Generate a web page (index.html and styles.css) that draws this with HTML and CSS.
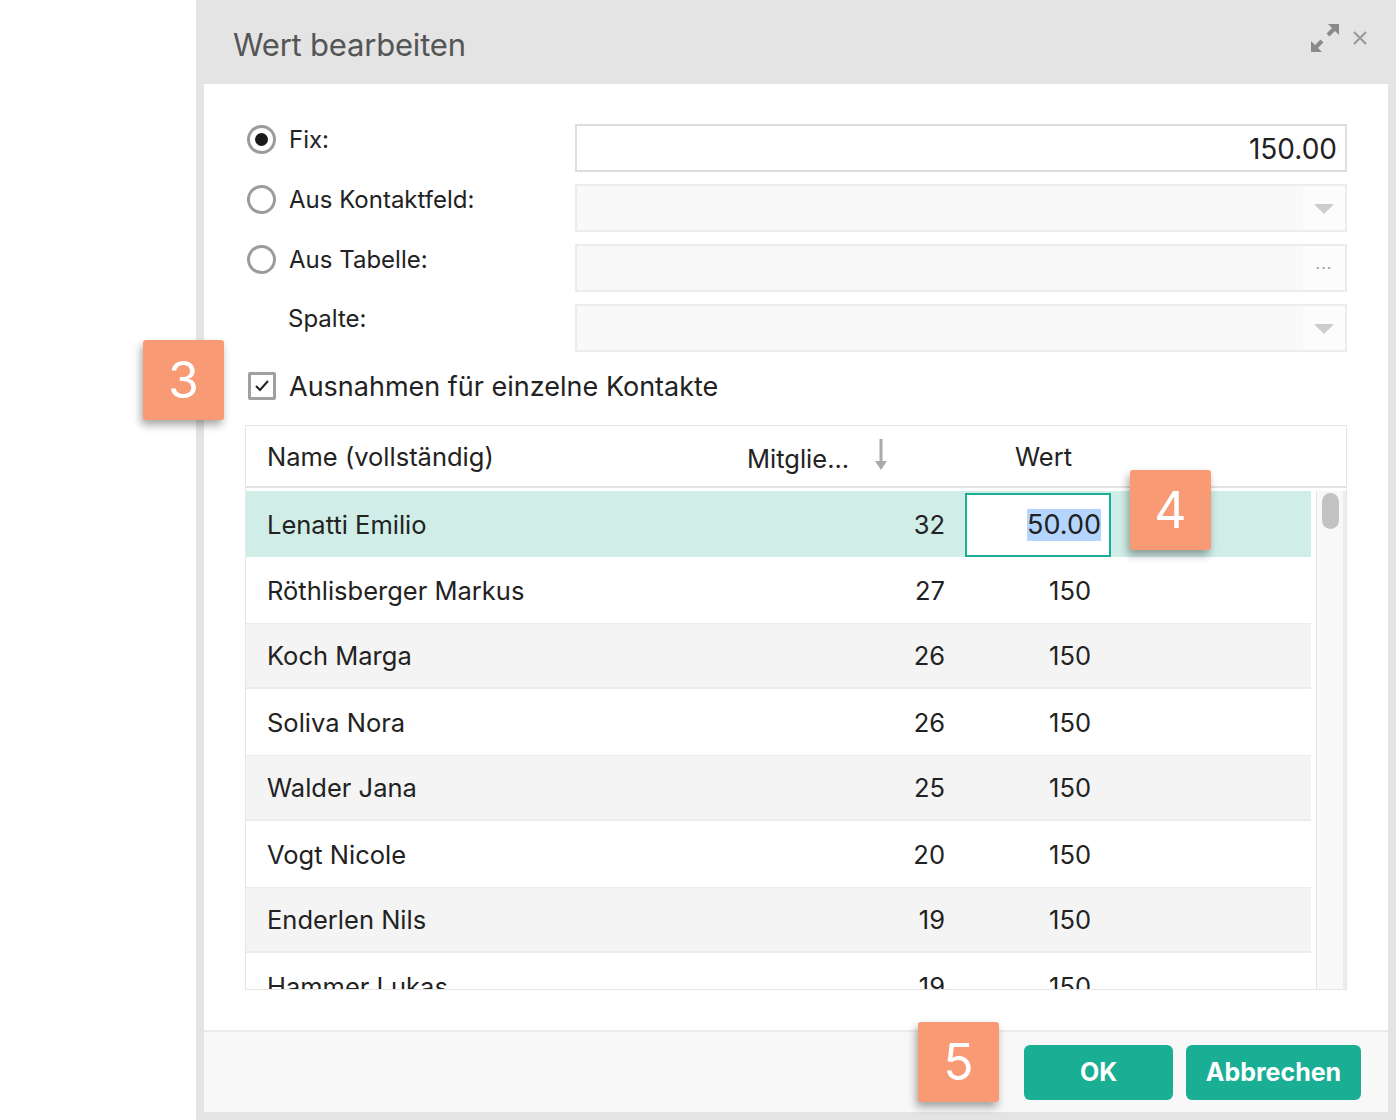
FILE: index.html
```html
<!DOCTYPE html>
<html lang="de">
<head>
    <meta charset="UTF-8">
    <title>Wert bearbeiten</title>
    <link rel="stylesheet" href="styles.css">
</head>
<body>
    <div class="page">
        <div class="dialog">
            <div class="dialog-header">
                <h2 class="dialog-title">Wert bearbeiten</h2>
                <div class="header-tools">
                    <svg class="tool-icon" width="30" height="30" viewBox="0 0 30 30">
                        <line x1="5" y1="25" x2="12" y2="18" stroke="#8a8a8a" stroke-width="4"/>
                        <polygon points="1,29 1,18 12,29" fill="#8a8a8a"/>
                        <line x1="25" y1="5" x2="18" y2="12" stroke="#8a8a8a" stroke-width="4"/>
                        <polygon points="29,1 29,12 18,1" fill="#8a8a8a"/>
                    </svg>
                    <svg class="tool-icon" width="16" height="16" viewBox="0 0 16 16">
                        <path d="M2 2 L14 14 M14 2 L2 14" stroke="#9a9a9a" stroke-width="2.2" fill="none"/>
                    </svg>
                </div>
            </div>

            <div class="dialog-body">
                <div class="form-grid">
                    <label class="option">
                        <span class="radio checked"></span>
                        <span>Fix:</span>
                    </label>
                    <div class="field field-white">150.00</div>

                    <label class="option">
                        <span class="radio"></span>
                        <span>Aus Kontaktfeld:</span>
                    </label>
                    <div class="field field-muted">
                        <span class="field-text"></span>
                        <span class="field-button"><span class="caret"></span></span>
                    </div>

                    <label class="option">
                        <span class="radio"></span>
                        <span>Aus Tabelle:</span>
                    </label>
                    <div class="field field-muted">
                        <span class="field-text"></span>
                        <span class="field-button dots">&middot;&middot;&middot;</span>
                    </div>

                    <label class="option option-indent">
                        <span>Spalte:</span>
                    </label>
                    <div class="field field-muted">
                        <span class="field-text"></span>
                        <span class="field-button"><span class="caret"></span></span>
                    </div>
                </div>

                <label class="check-row">
                    <span class="checkbox">
                        <svg width="16" height="14" viewBox="0 0 16 14">
                            <path d="M2 7 L6 11 L14 2" stroke="#222" stroke-width="2" fill="none"/>
                        </svg>
                    </span>
                    <span>Ausnahmen für einzelne Kontakte</span>
                </label>

                <div class="grid">
                    <div class="grid-head">
                        <div class="col-name">Name (vollständig)</div>
                        <div class="col-count head-count">
                            <span>Mitglie...</span>
                            <svg class="sort-arrow" width="12" height="32" viewBox="0 0 12 32">
                                <rect x="4.5" y="0" width="3" height="24" fill="#aaa"/>
                                <polygon points="0,22 12,22 6,31" fill="#aaa"/>
                            </svg>
                        </div>
                        <div class="col-value head-value">Wert</div>
                    </div>
                    <div class="grid-body">
                        <div class="rows">
                            <div class="row selected">
                                <div class="col-name">Lenatti Emilio</div>
                                <div class="col-count">32</div>
                                <div class="col-value">
                                    <div class="cell-editor"><span class="selection">50.00</span></div>
                                </div>
                            </div>
                            <div class="row">
                                <div class="col-name">Röthlisberger Markus</div>
                                <div class="col-count">27</div>
                                <div class="col-value">150</div>
                            </div>
                            <div class="row alt">
                                <div class="col-name">Koch Marga</div>
                                <div class="col-count">26</div>
                                <div class="col-value">150</div>
                            </div>
                            <div class="row">
                                <div class="col-name">Soliva Nora</div>
                                <div class="col-count">26</div>
                                <div class="col-value">150</div>
                            </div>
                            <div class="row alt">
                                <div class="col-name">Walder Jana</div>
                                <div class="col-count">25</div>
                                <div class="col-value">150</div>
                            </div>
                            <div class="row">
                                <div class="col-name">Vogt Nicole</div>
                                <div class="col-count">20</div>
                                <div class="col-value">150</div>
                            </div>
                            <div class="row alt">
                                <div class="col-name">Enderlen Nils</div>
                                <div class="col-count">19</div>
                                <div class="col-value">150</div>
                            </div>
                            <div class="row">
                                <div class="col-name">Hammer Lukas</div>
                                <div class="col-count">19</div>
                                <div class="col-value">150</div>
                            </div>
                        </div>
                        <div class="scrollbar">
                            <div class="scroll-thumb"></div>
                        </div>
                    </div>
                </div>
            </div>

            <div class="dialog-footer">
                <button class="btn">OK</button>
                <button class="btn">Abbrechen</button>
            </div>
        </div>
    </div>

    <div class="badge badge-3">3</div>
    <div class="badge badge-4">4</div>
    <div class="badge badge-5">5</div>
</body>
</html>
```

FILE: styles.css
```css
:root {
    --frame: #e4e4e4;
    --text: #222222;
    --line: #e6e6e6;
    --teal: #1aae94;
    --badge: #f89b75;
}

* {
    margin: 0;
    padding: 0;
    box-sizing: border-box;
}

body {
    font-family: Inter, "Noto Sans", sans-serif;
    color: var(--text);
    background: #ffffff;
    width: 1396px;
    height: 1120px;
    overflow: hidden;
}

.page {
    display: flex;
    height: 1120px;
    padding-left: 196px;
}

.dialog {
    width: 1200px;
    height: 1120px;
    background: var(--frame);
    padding: 0 8px 8px 8px;
    display: flex;
    flex-direction: column;
}

/* header */

.dialog-header {
    height: 84px;
    flex-shrink: 0;
    display: flex;
    align-items: center;
    padding: 0 20px 0 29px;
}

.dialog-title {
    font-size: 31px;
    font-weight: 400;
    color: #555555;
    letter-spacing: -0.2px;
    margin-top: 4px;
}

.header-tools {
    margin-left: auto;
    display: flex;
    align-items: center;
    gap: 12px;
    margin-top: -8px;
}

/* body */

.dialog-body {
    flex: 1;
    min-height: 0;
    background: #ffffff;
    padding: 40px 41px 40px 41px;
    display: flex;
    flex-direction: column;
}

.form-grid {
    display: grid;
    grid-template-columns: 330px 1fr;
    grid-auto-rows: 48px;
    row-gap: 12px;
}

.option {
    display: flex;
    align-items: flex-start;
    gap: 13px;
    font-size: 24px;
    padding-top: 1px;
    padding-left: 2px;
    line-height: 30px;
}

.option-indent {
    padding-left: 43px;
    padding-top: 0;
}

.radio {
    width: 29px;
    height: 29px;
    border: 3px solid #9b9b9b;
    border-radius: 50%;
    display: flex;
    align-items: center;
    justify-content: center;
    flex-shrink: 0;
}

.radio.checked::after {
    content: "";
    width: 13px;
    height: 13px;
    border-radius: 50%;
    background: #1a1a1a;
}

.field {
    display: flex;
    align-items: center;
    height: 48px;
    font-size: 28px;
}

.field-white {
    border: 2px solid #dedede;
    justify-content: flex-end;
    padding-right: 8px;
    padding-top: 1px;
}

.field-muted {
    border: 2px solid #ececec;
    background: #f9f9f9;
}

.field-text {
    flex: 1;
}

.field-button {
    width: 42px;
    height: 100%;
    background: #fcfcfc;
    display: flex;
    align-items: center;
    justify-content: center;
}

.caret {
    width: 0;
    height: 0;
    border-left: 10px solid transparent;
    border-right: 10px solid transparent;
    border-top: 10px solid #cccccc;
    margin-top: 2px;
}

.dots {
    color: #999999;
    font-size: 16px;
    letter-spacing: 1px;
}

.check-row {
    display: flex;
    align-items: center;
    gap: 13px;
    height: 48px;
    margin-top: 10px;
    font-size: 27px;
    padding-left: 3px;
    flex-shrink: 0;
}

.checkbox {
    width: 28px;
    height: 28px;
    border: 3px solid #a0a0a0;
    border-radius: 2px;
    display: flex;
    align-items: center;
    justify-content: center;
}

/* grid */

.grid {
    flex: 1;
    min-height: 0;
    margin-top: 15px;
    border: 1px solid var(--line);
    display: flex;
    flex-direction: column;
    overflow: hidden;
    font-size: 25.5px;
}

.grid-head {
    height: 62px;
    border-bottom: 2px solid #e3e3e3;
    display: flex;
    align-items: center;
    flex-shrink: 0;
}

.grid-body {
    flex: 1;
    display: flex;
    padding-top: 3px;
    min-height: 0;
}

.rows {
    width: 1066px;
    overflow: hidden;
}

.row {
    height: 66px;
    display: flex;
    align-items: center;
}

.row.alt {
    background: #f4f4f4;
    border-top: 1px solid #ebebeb;
    border-bottom: 2px solid #ebebeb;
}

.row.selected {
    background: #d0ede7;
}

.col-name {
    width: 474px;
    padding-left: 21px;
}

.col-count {
    width: 245px;
    text-align: right;
    padding-right: 20px;
}

.head-count {
    display: flex;
    align-items: center;
    text-align: left;
    padding-left: 27px;
    gap: 26px;
    padding-top: 4px;
}

.sort-arrow {
    margin-top: -6px;
}

.col-value {
    width: 146px;
    text-align: right;
    padding-right: 20px;
    height: 100%;
    display: flex;
    align-items: center;
    justify-content: flex-end;
}

.head-value {
    justify-content: flex-start;
    padding-left: 50px;
}

.selected .col-value {
    padding: 2px 0 0 0;
}

.cell-editor {
    width: 100%;
    height: 100%;
    background: #ffffff;
    border: 2px solid var(--teal);
    display: flex;
    align-items: center;
    justify-content: flex-end;
    padding-right: 8px;
    font-size: 27px;
}

.selection {
    background: #b4d5fe;
    line-height: 32px;
}

.scrollbar {
    margin-left: 5px;
    width: 30px;
    background: #f8f8f8;
    border-left: 1px solid var(--line);
    border-right: 3px solid #ededed;
    padding: 2px 0 0 5px;
}

.scroll-thumb {
    width: 17px;
    height: 36px;
    border-radius: 9px;
    background: #c2c2c2;
}

/* footer */

.dialog-footer {
    height: 82px;
    flex-shrink: 0;
    background: #f8f8f8;
    border-top: 2px solid #ebebeb;
    display: flex;
    align-items: center;
    justify-content: flex-end;
    gap: 13px;
    padding-right: 27px;
}

.btn {
    height: 55px;
    border: none;
    border-radius: 6px;
    background: var(--teal);
    color: #ffffff;
    font-family: Inter, "Noto Sans", sans-serif;
    font-size: 25px;
    font-weight: 700;
    padding: 0 18px;
}

.btn:first-child {
    width: 149px;
}

.btn:last-child {
    width: 175px;
}

/* numbered callouts laid over the screenshot */

.badge {
    position: absolute;
    width: 81px;
    height: 80px;
    background: var(--badge);
    border-radius: 3px;
    color: #ffffff;
    font-family: Inter, "Noto Sans", sans-serif;
    font-size: 50px;
    font-weight: 400;
    display: flex;
    align-items: center;
    justify-content: center;
    box-shadow: -2px 5px 8px rgba(0, 0, 0, 0.35);
}

.badge-3 {
    left: 143px;
    top: 340px;
}

.badge-4 {
    left: 1130px;
    top: 470px;
}

.badge-5 {
    left: 918px;
    top: 1022px;
}
```
